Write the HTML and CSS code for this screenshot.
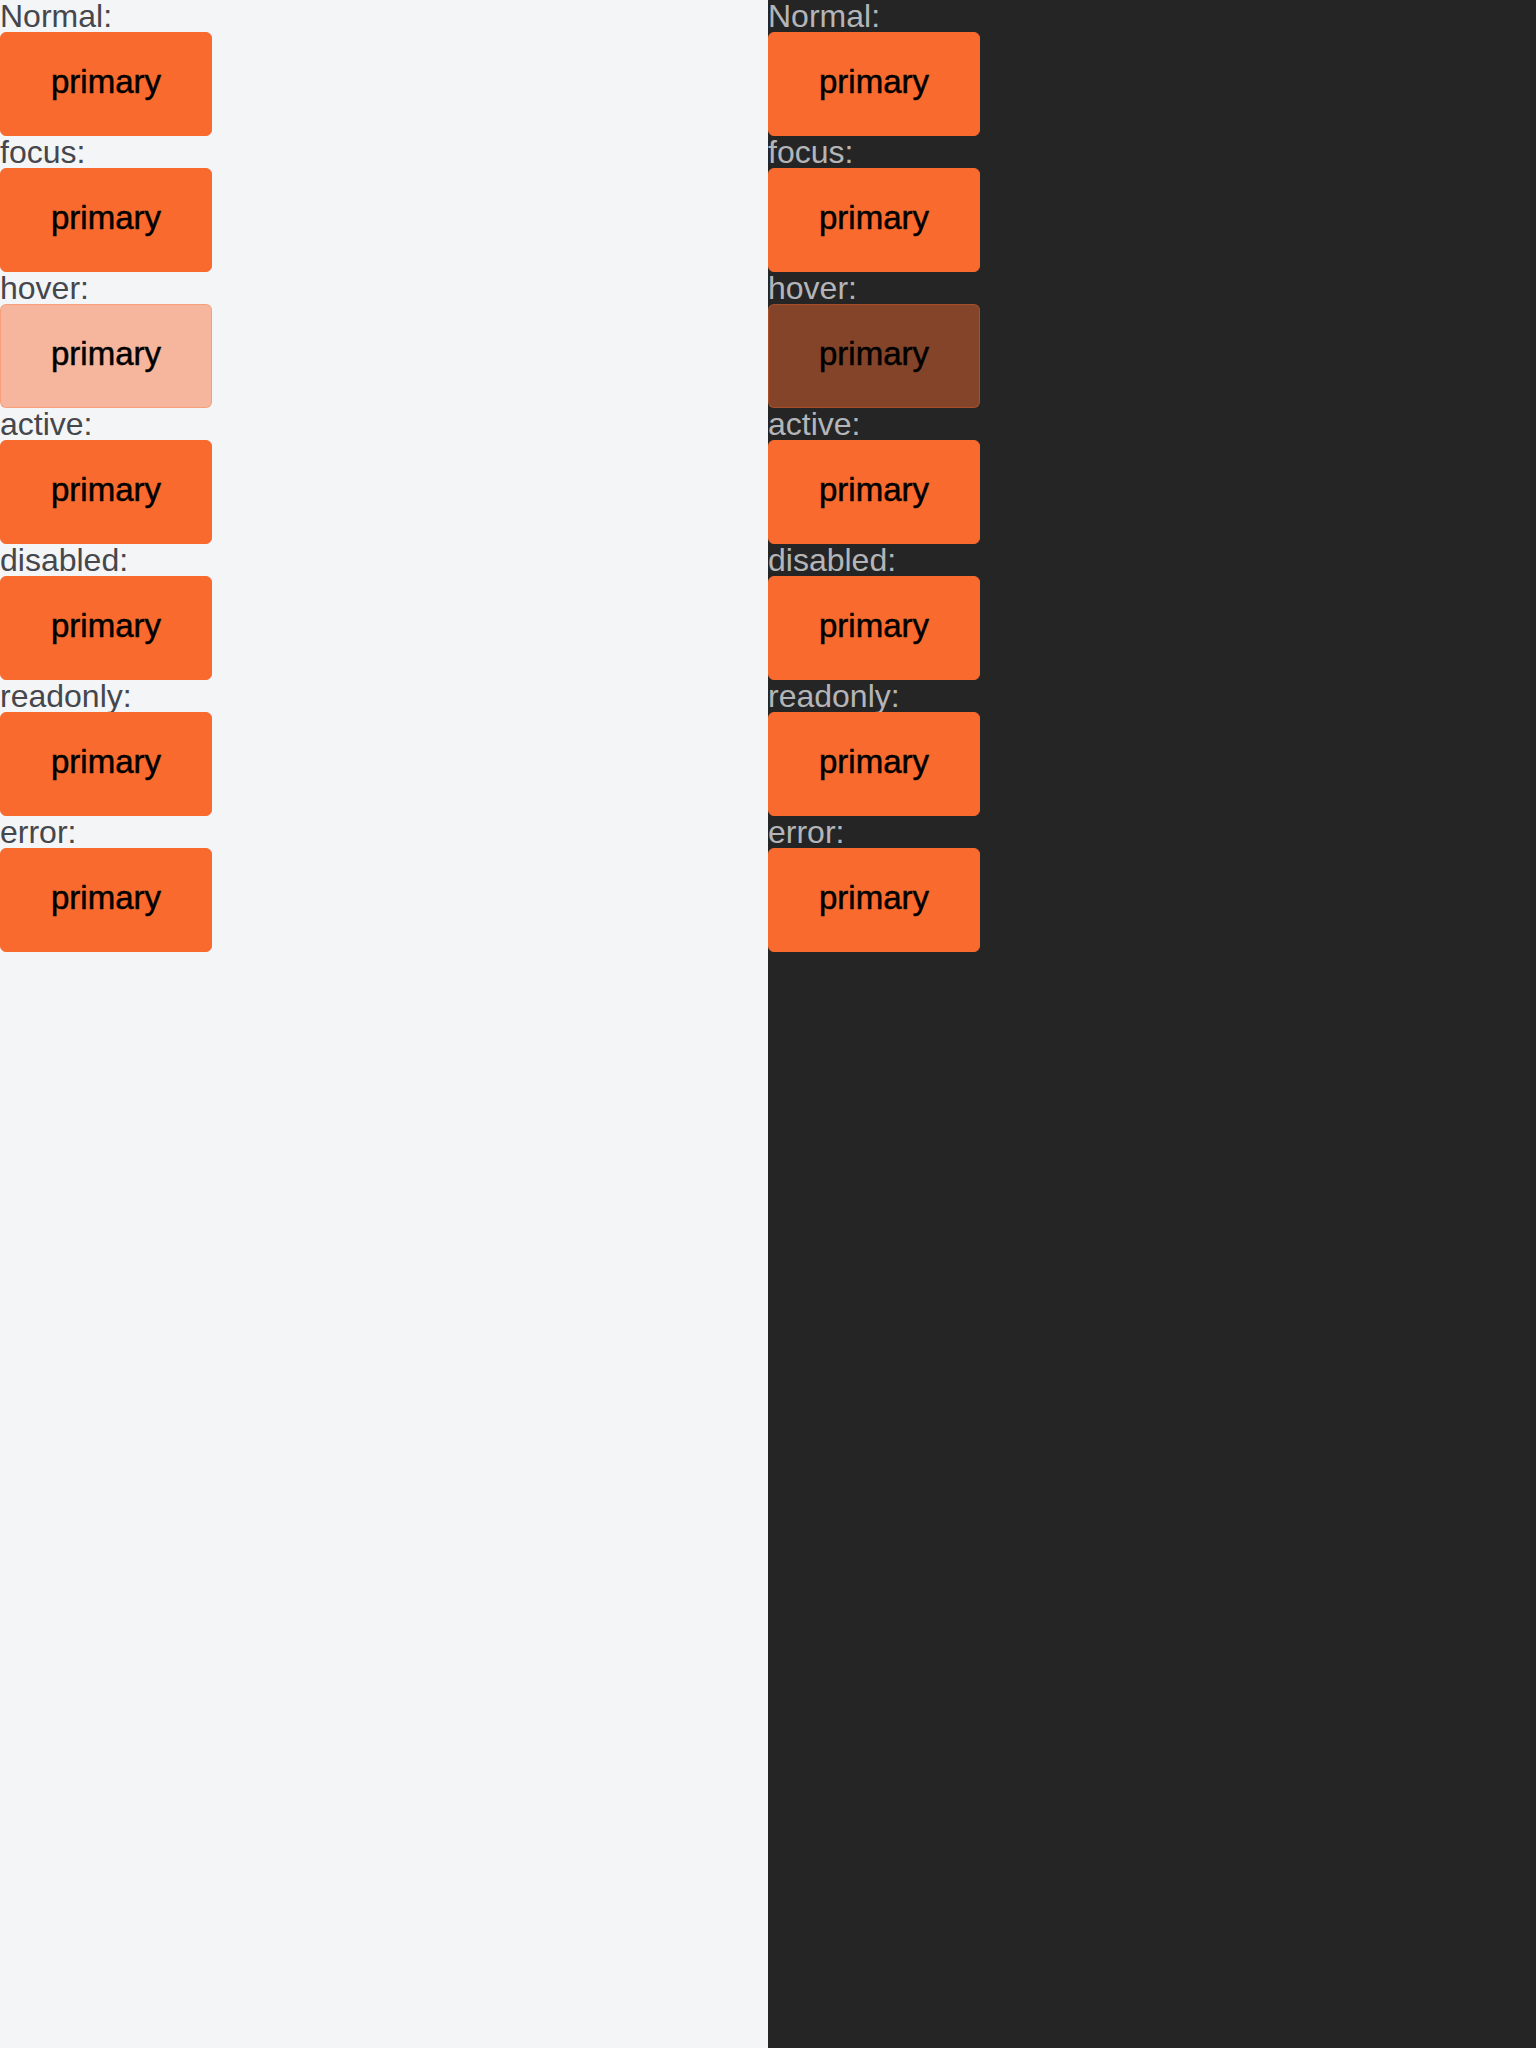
FILE: index.html
```html
<!DOCTYPE html>
<html>
<head>
<meta charset="utf-8">
<link rel="stylesheet" href="styles.css">
</head>
<body>
<div class="page">
  <div class="panel light">
    <div class="label">Normal:</div>
    <button class="btn">primary</button>
    <div class="label">focus:</div>
    <button class="btn">primary</button>
    <div class="label">hover:</div>
    <button class="btn hover">primary</button>
    <div class="label">active:</div>
    <button class="btn">primary</button>
    <div class="label">disabled:</div>
    <button class="btn">primary</button>
    <div class="label">readonly:</div>
    <button class="btn">primary</button>
    <div class="label">error:</div>
    <button class="btn">primary</button>
  </div>
  <div class="panel dark">
    <div class="label">Normal:</div>
    <button class="btn">primary</button>
    <div class="label">focus:</div>
    <button class="btn">primary</button>
    <div class="label">hover:</div>
    <button class="btn hover">primary</button>
    <div class="label">active:</div>
    <button class="btn">primary</button>
    <div class="label">disabled:</div>
    <button class="btn">primary</button>
    <div class="label">readonly:</div>
    <button class="btn">primary</button>
    <div class="label">error:</div>
    <button class="btn">primary</button>
  </div>
</div>
</body>
</html>
```
FILE: styles.css
```css
html, body {
  margin: 0;
  padding: 0;
}
body {
  font-family: "Liberation Sans", Arial, sans-serif;
}
.page {
  display: flex;
  width: 1536px;
  height: 2048px;
}
.panel {
  width: 768px;
  display: flex;
  flex-direction: column;
  align-items: flex-start;
}
.light {
  background: #f4f5f7;
  color: #45474c;
}
.dark {
  background: #252525;
  color: #b4b5b8;
}
.label {
  font-size: 32px;
  line-height: 32px;
  height: 32px;
  white-space: nowrap;
}
.btn {
  width: 212px;
  height: 104px;
  margin: 0;
  padding: 0 0 5px 0;
  border: 1px solid #f96a2e;
  border-radius: 6px;
  background: #f96a2e;
  color: #000;
  font-family: "Liberation Sans", Arial, sans-serif;
  font-size: 33px;
  font-weight: 400;
  -webkit-text-stroke: 0.5px #000;
  display: flex;
  align-items: center;
  justify-content: center;
}
.btn.hover {
  background: rgba(249, 106, 46, 0.45);
  border-color: rgba(249, 106, 46, 0.3);
}
```
